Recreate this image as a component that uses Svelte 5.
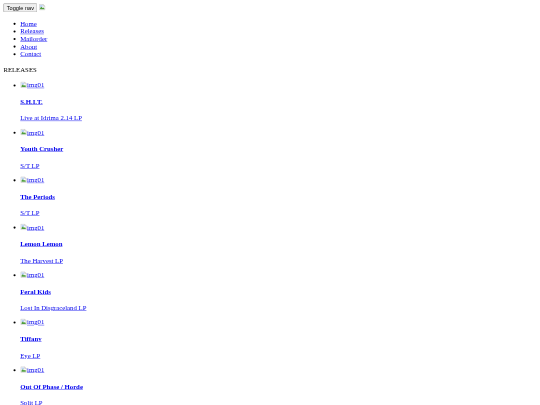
<script lang="ts">
  const nav = ["Home", "Releases", "Mailorder", "About", "Contact"];
  const releases = [
    { band: "S.H.I.T.", title: "Live at Idrima 2.14 LP" },
    { band: "Youth Crusher", title: "S/T LP" },
    { band: "The Periods", title: "S/T LP" },
    { band: "Lemon Lemon", title: "The Harvest LP" },
    { band: "Feral Kids", title: "Lost In Disgraceland LP" },
    { band: "Tiffany", title: "Eye LP" },
    { band: "Out Of Phase / Horde", title: "Split LP" },
  ];
</script>

{#snippet broken()}
  <svg class="broken" viewBox="0 0 16 16" aria-hidden="true">
    <path d="M1.5 1.5h9l4 4v9h-13z" fill="#fff" stroke="#a8a8a8" />
    <path d="M10.5 1.5v4h4" fill="#eee" stroke="#a8a8a8" />
    <path d="M3 3h6v5H3z" fill="#bcd2f4" />
    <path d="M3 13v-3l3-3 3 3 2-1.5 2 2V13z" fill="#4f9d3c" />
  </svg>
{/snippet}

<div class="viewport">
  <div class="page">
    <button type="button">Toggle nav</button>
    {@render broken()}
    <ul class="nav">
      {#each nav as item}
        <li><a href="#top">{item}</a></li>
      {/each}
    </ul>
    <div class="heading">RELEASES</div>
    <ul>
      {#each releases as r}
        <li>
          <a href="#top">{@render broken()}img01</a>
          <h4><a href="#top">{r.band}</a></h4>
          <p><a href="#top">{r.title}</a></p>
        </li>
      {/each}
    </ul>
  </div>
</div>

<style>
  :global(html),
  :global(body) {
    background: #fff;
    overflow: hidden;
  }
  .viewport {
    width: 540px;
    height: 405px;
    overflow: hidden;
  }
  /* the page is laid out at 1280 wide and shrunk to the window */
  .page {
    box-sizing: border-box;
    width: 1280px;
    padding: 8px;
    font-family: "Liberation Serif", serif;
    font-size: 16px;
    color: #000;
    transform: scale(0.421875);
    transform-origin: 0 0;
    filter: blur(0.9px);
  }
  a {
    color: #00e;
  }
  button {
    font-family: "Liberation Sans", sans-serif;
    font-size: 13.33px;
  }
  .broken {
    display: inline-block;
    width: 16px;
    height: 16px;
    vertical-align: -2px;
  }
  .nav {
    margin-top: 18px;
    margin-bottom: 20px;
  }
  .heading + ul {
    margin-top: 17.5px;
  }
</style>
